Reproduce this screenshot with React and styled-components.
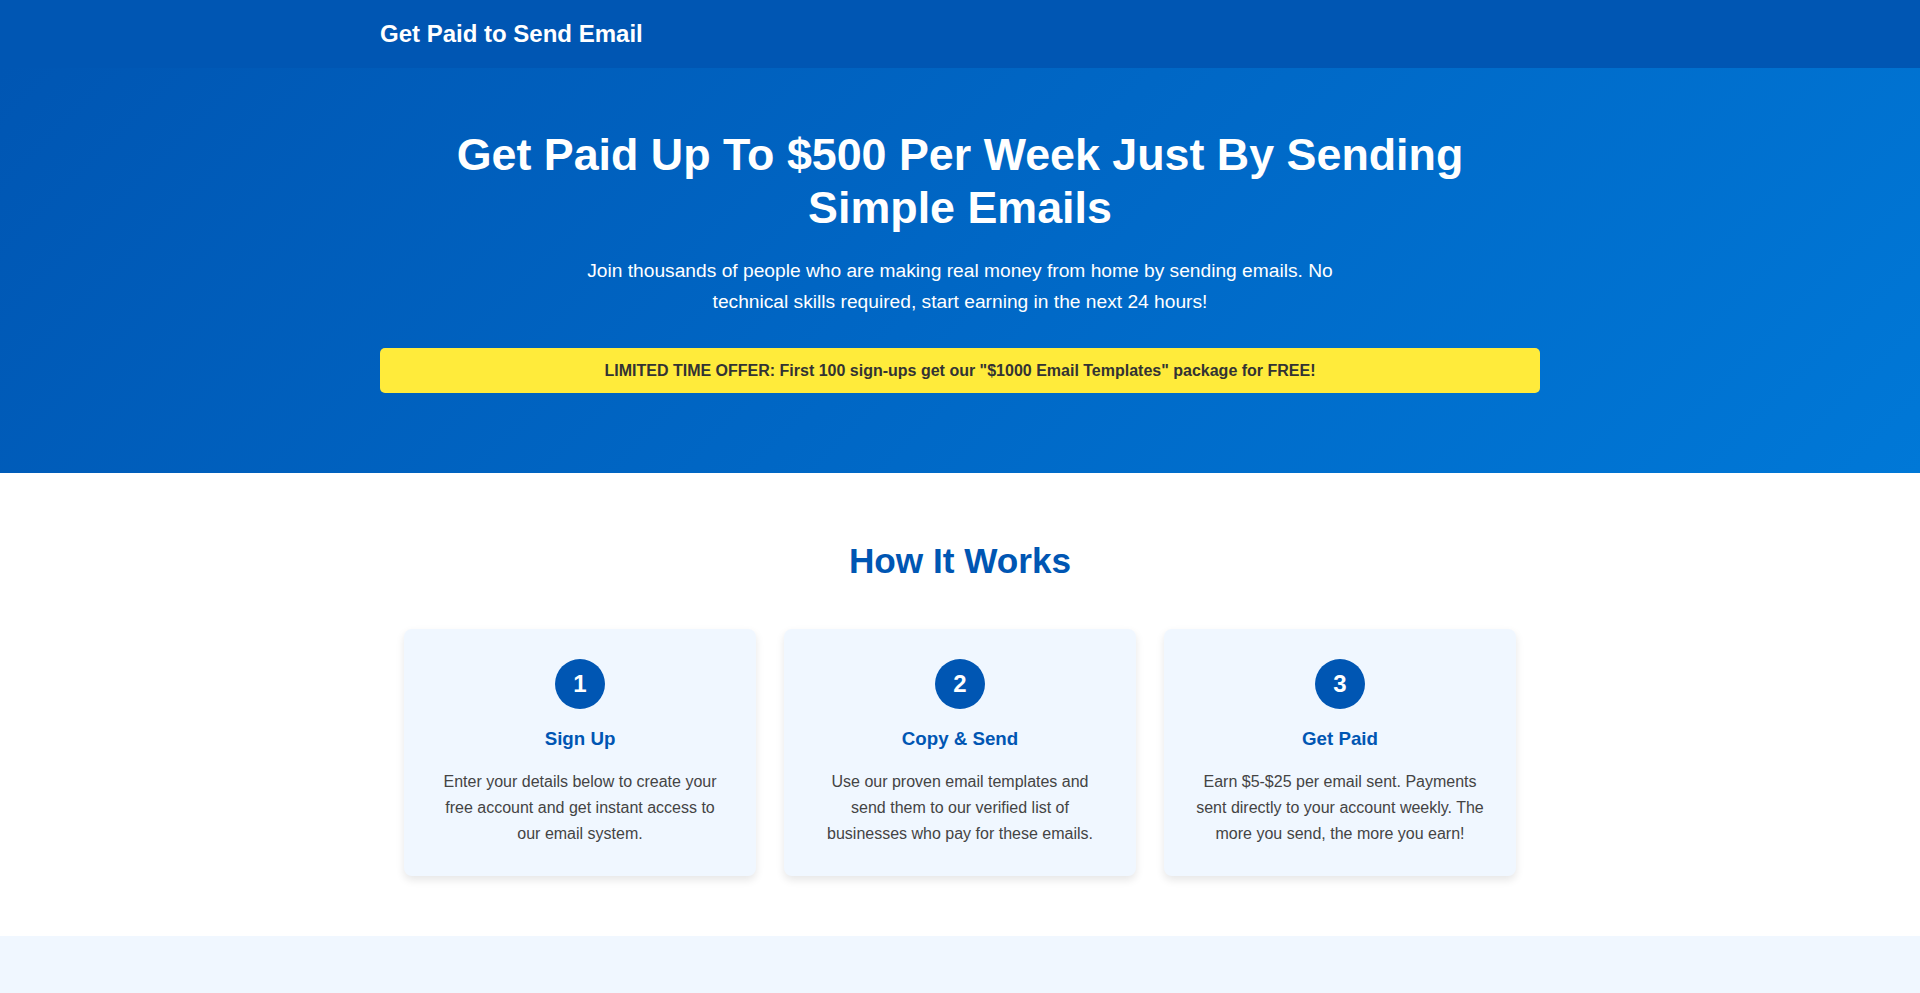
import React from "react";
import styled, { createGlobalStyle } from "styled-components";

const GlobalStyle = createGlobalStyle`
  * { box-sizing: border-box; }
  html, body { margin: 0; padding: 0; }
  body {
    font-family: "Liberation Sans", Arial, Helvetica, sans-serif;
    line-height: 1.6;
    color: #333;
    background: #fff;
  }
`;

const Container = styled.div`
  max-width: 1200px;
  margin: 0 auto;
  padding: 0 20px;
`;

const Header = styled.header`
  background: #0056b3;
  color: #fff;
  padding: 20px 0;
`;

const Logo = styled.div`
  font-size: 24px;
  font-weight: 700;
  line-height: 1.15;
`;

const Hero = styled.section`
  background: linear-gradient(135deg, #0056b3 0%, #0078d7 100%);
  color: #fff;
  text-align: center;
  padding: 60px 0 80px;
`;

const HeroTitle = styled.h1`
  font-size: 2.8rem;
  line-height: 1.2;
  font-weight: 700;
  max-width: 1100px;
  margin: 0 auto 21px;
`;

const HeroText = styled.p`
  font-size: 1.2rem;
  line-height: 1.6;
  max-width: 800px;
  margin: 0 auto 30px;
`;

const Offer = styled.div`
  background: #ffeb3b;
  color: #333;
  font-weight: 700;
  font-size: 16px;
  padding: 10px 20px;
  border-radius: 5px;
`;

const Steps = styled.section`
  background: #fff;
  padding: 61.5px 0 60px;
  text-align: center;
`;

const SectionTitle = styled.h2`
  color: #0056b3;
  font-size: 2.2rem;
  line-height: 1.5;
  margin: 0 0 42px;
`;

const Cards = styled.div`
  display: flex;
  justify-content: center;
  gap: 28px;
`;

const Card = styled.div`
  flex: 0 0 352px;
  background: #f0f7ff;
  border-radius: 8px;
  padding: 30px;
  box-shadow: 0 4px 8px rgba(0, 0, 0, 0.1);
`;

const Number = styled.div`
  width: 50px;
  height: 50px;
  border-radius: 50%;
  background: #0056b3;
  color: #fff;
  font-size: 1.5rem;
  font-weight: 700;
  line-height: 50px;
  margin: 0 auto 15px;
`;

const CardTitle = styled.h3`
  color: #0056b3;
  font-size: 1.17rem;
  line-height: 1.6;
  margin: 0 0 15px;
`;

const CardText = styled.p`
  color: #444;
  font-size: 16px;
  line-height: 1.6;
  margin: 0;
`;

const SignupSection = styled.section`
  background: #f0f7ff;
  min-height: 400px;
`;

const steps = [
  {
    n: 1,
    title: "Sign Up",
    text: "Enter your details below to create your free account and get instant access to our email system.",
  },
  {
    n: 2,
    title: "Copy & Send",
    text: "Use our proven email templates and send them to our verified list of businesses who pay for these emails.",
  },
  {
    n: 3,
    title: "Get Paid",
    text: "Earn $5-$25 per email sent. Payments sent directly to your account weekly. The more you send, the more you earn!",
  },
];

export default function App() {
  return (
    <>
      <GlobalStyle />
      <Header>
        <Container>
          <Logo>Get Paid to Send Email</Logo>
        </Container>
      </Header>
      <Hero>
        <Container>
          <HeroTitle>Get Paid Up To $500 Per Week Just By Sending Simple Emails</HeroTitle>
          <HeroText>
            Join thousands of people who are making real money from home by sending emails. No
            technical skills required, start earning in the next 24 hours!
          </HeroText>
          <Offer>
            LIMITED TIME OFFER: First 100 sign-ups get our "$1000 Email Templates" package for FREE!
          </Offer>
        </Container>
      </Hero>
      <Steps>
        <Container>
          <SectionTitle>How It Works</SectionTitle>
          <Cards>
            {steps.map((s) => (
              <Card key={s.n}>
                <Number>{s.n}</Number>
                <CardTitle>{s.title}</CardTitle>
                <CardText>{s.text}</CardText>
              </Card>
            ))}
          </Cards>
        </Container>
      </Steps>
      <SignupSection />
    </>
  );
}
